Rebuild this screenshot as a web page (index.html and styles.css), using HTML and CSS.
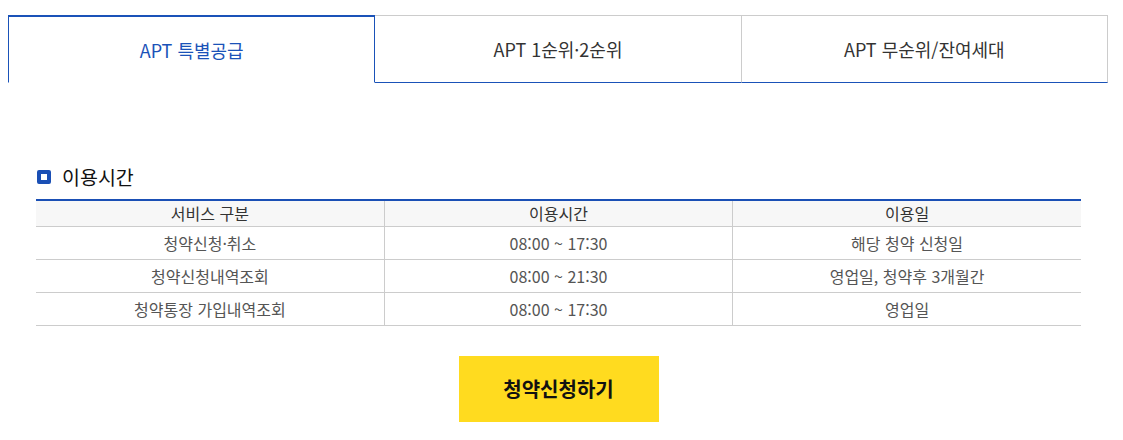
FILE: index.html
```html
<!DOCTYPE html>
<html lang="ko">
<head>
  <meta charset="UTF-8" />
  <meta name="viewport" content="width=device-width, initial-scale=1.0"/>
  <title>청약신청</title>
  <link rel="stylesheet" href="styles.css">
</head>
<body>

  <!-- Tabs -->
  <ul class="tabs">
    <li class="tab active">APT 특별공급</li>
    <li class="tab">APT 1순위·2순위</li>
    <li class="tab">APT 무순위/잔여세대</li>
  </ul>

  <!-- 이용시간 -->
  <div class="section">
    <h3 class="sec-title"><span class="sq"></span>이용시간</h3>

    <table class="time-table">
      <thead>
        <tr>
          <th>서비스 구분</th>
          <th>이용시간</th>
          <th>이용일</th>
        </tr>
      </thead>
      <tbody>
        <tr>
          <td>청약신청·취소</td>
          <td>08:00 ~ 17:30</td>
          <td>해당 청약 신청일</td>
        </tr>
        <tr>
          <td>청약신청내역조회</td>
          <td>08:00 ~ 21:30</td>
          <td>영업일, 청약후 3개월간</td>
        </tr>
        <tr>
          <td>청약통장 가입내역조회</td>
          <td>08:00 ~ 17:30</td>
          <td>영업일</td>
        </tr>
      </tbody>
    </table>

    <div class="btn-wrap">
      <button class="btn-apply">청약신청하기</button>
    </div>
  </div>

</body>
</html>
```

FILE: styles.css
```css
* {
  box-sizing: border-box;
  margin: 0;
  padding: 0;
}

body {
  font-family: "Noto Sans CJK KR", "Noto Sans", sans-serif;
  background: #fff;
  color: #333;
  width: 1123px;
}

/* Tabs */
.tabs {
  list-style: none;
  display: flex;
  width: 1100px;
  margin: 15px 0 0 8px;
}

.tab {
  flex: 1;
  height: 68px;
  display: flex;
  justify-content: center;
  align-items: center;
  font-size: 18px;
  color: #333;
  border-top: 1px solid #ccc;
  border-right: 1px solid #ccc;
  border-bottom: 1px solid #1a52b8;
}

.tab.active {
  color: #1a52b8;
  border: 1px solid #1a52b8;
  border-top-width: 2px;
  border-bottom: 1px solid #fff;
}

/* Section */
.section {
  width: 1045px;
  margin: 80px 0 0 36px;
}

.sec-title {
  display: flex;
  align-items: center;
  height: 26px;
  font-size: 19.5px;
  font-weight: normal;
  color: #111;
  margin-bottom: 10px;
}

.sq {
  width: 14px;
  height: 14px;
  border: 4px solid #1a4fb5;
  border-radius: 2px;
  margin: 1px 11px 0 1px;
}

/* Table */
.time-table {
  width: 100%;
  border-collapse: collapse;
  table-layout: fixed;
  border-top: 2px solid #1a4fb5;
  font-size: 16px;
}

.time-table th {
  height: 26px;
  font-weight: normal;
  color: #333;
  background: #f7f7f7;
  border-bottom: 1px solid #ccc;
  border-left: 1px solid #ccc;
}

.time-table td {
  height: 33px;
  color: #555;
  text-align: center;
  border-bottom: 1px solid #ccc;
  border-left: 1px solid #ccc;
}

.time-table th:first-child,
.time-table td:first-child {
  border-left: none;
}

/* Button */
.btn-wrap {
  display: flex;
  justify-content: center;
  margin-top: 30px;
}

.btn-apply {
  width: 200px;
  height: 66px;
  border: none;
  background: #ffdb1f;
  color: #111;
  font-family: inherit;
  font-size: 20px;
  font-weight: bold;
  cursor: pointer;
}
```
